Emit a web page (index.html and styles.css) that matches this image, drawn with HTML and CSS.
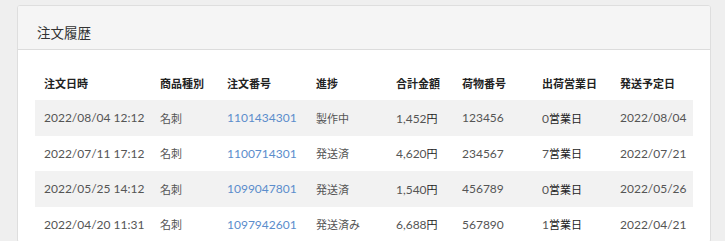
FILE: index.html
```html
<!DOCTYPE html>
<html lang="ja">
<head>
<meta charset="utf-8">
<link rel="stylesheet" href="styles.css">
</head>
<body>
<div class="page">
  <div class="card">
    <div class="card-header">注文履歴</div>
    <div class="card-body">
      <table class="orders">
        <colgroup>
          <col class="c1"><col class="c2"><col class="c3"><col class="c4"><col class="c5"><col class="c6"><col class="c7"><col class="c8">
        </colgroup>
        <thead>
          <tr><th>注文日時</th><th>商品種別</th><th>注文番号</th><th>進捗</th><th>合計金額</th><th>荷物番号</th><th>出荷営業日</th><th>発送予定日</th></tr>
        </thead>
        <tbody>
          <tr><td class="num">2022/08/04 12:12</td><td class="ja">名刺</td><td><a class="link" href="#">1101434301</a></td><td class="ja">製作中</td><td class="num">1,452<span class="ja">円</span></td><td class="num">123456</td><td>0<span class="ja">営業日</span></td><td class="num">2022/08/04</td></tr>
          <tr><td class="num">2022/07/11 17:12</td><td class="ja">名刺</td><td><a class="link" href="#">1100714301</a></td><td class="ja">発送済</td><td class="num">4,620<span class="ja">円</span></td><td class="num">234567</td><td>7<span class="ja">営業日</span></td><td class="num">2022/07/21</td></tr>
          <tr><td class="num">2022/05/25 14:12</td><td class="ja">名刺</td><td><a class="link" href="#">1099047801</a></td><td class="ja">発送済</td><td class="num">1,540<span class="ja">円</span></td><td class="num">456789</td><td>0<span class="ja">営業日</span></td><td class="num">2022/05/26</td></tr>
          <tr><td class="num">2022/04/20 11:31</td><td class="ja">名刺</td><td><a class="link" href="#">1097942601</a></td><td class="ja">発送済み</td><td class="num">6,688<span class="ja">円</span></td><td class="num">567890</td><td>1<span class="ja">営業日</span></td><td class="num">2022/04/21</td></tr>
        </tbody>
      </table>
    </div>
  </div>
</div>
</body>
</html>
```
FILE: styles.css
```css
html, body {
  margin: 0;
  padding: 0;
  background: #efefef;
  font-family: "Lato", "Noto Sans CJK JP", sans-serif;
  color: #333;
}
.page {
  padding: 5px 14px 0 17px;
}
.card {
  background: #fff;
  border: 1px solid #dedede;
  border-radius: 3px;
  overflow: hidden;
}
.card-header {
  background: #f5f5f5;
  border-bottom: 1px solid #dcdcdc;
  height: 34px;
  padding-top: 9px;
  line-height: 34px;
  padding-left: 19px;
  font-size: 13.5px;
  color: #333;
  font-family: "Noto Sans CJK JP", sans-serif;
  font-weight: 400;
}
.card-body {
  padding: 15px 17px 0 17px;
}
.orders {
  width: 658px;
  border-collapse: collapse;
  table-layout: fixed;
  font-size: 12px;
}
.c1 { width: 116px; }
.c2 { width: 67px; }
.c3 { width: 89px; }
.c4 { width: 80px; }
.c5 { width: 66px; }
.c6 { width: 80px; }
.c7 { width: 78px; }
.c8 { width: 82px; }
.orders th {
  text-align: left;
  font-weight: 700;
  font-size: 11px;
  height: 35px;
  padding: 0 0 0 9px;
  color: #222;
  font-family: "Noto Sans CJK JP", sans-serif;
}
.orders td {
  height: 35.5px;
  padding: 0 0 0 9px;
  white-space: nowrap;
  color: #555;
}
.ja {
  font-family: "Noto Sans CJK JP", sans-serif;
  font-size: 11px;
  color: #222;
}
.orders tbody tr:nth-child(odd) {
  background: #f2f2f2;
}
.link {
  color: #5b8dcc;
  text-decoration: none;
}
```
